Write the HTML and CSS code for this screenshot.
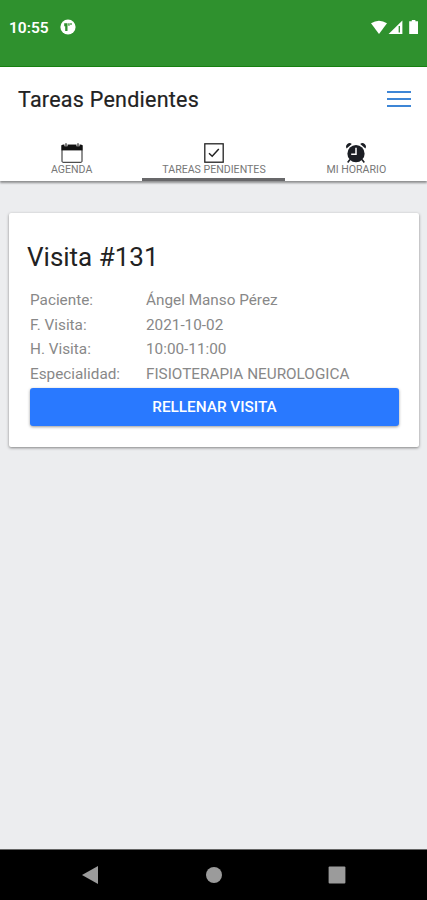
FILE: index.html
```html
<!DOCTYPE html>
<html lang="es">
<head>
  <meta charset="UTF-8">
  <meta name="viewport" content="width=device-width, initial-scale=1.0">
  <title>Tareas Pendientes</title>
  <link rel="stylesheet" href="styles.css">
</head>
<body>
  <div class="status-bar">
    <span class="clock">10:55</span>
    <svg class="app-icon" width="16" height="16" viewBox="0 0 16 16">
      <circle cx="8" cy="8" r="7.6" fill="#fff"/>
      <path d="M4.2 4.3h3.3v7.8H5.2V7.2h-1z" fill="#2f912e"/>
      <path d="M8.3 4.2h1.3v2.6H8.3zM10.2 4.2h1.6v1.6h-1.6z" fill="#2f912e"/>
    </svg>
    <svg class="signals" width="50" height="16" viewBox="0 0 50 16">
      <path d="M1 3.3Q9 -1.7 17 3.3L9 14z" fill="#fff"/>
      <path d="M18.6 14L32.4 0.4V14z" fill="#fff"/>
      <path d="M29.3 6V12.6" stroke="#2f912e" stroke-width="1.3"/>
      <path d="M41.8 0h3.6v1.3H48V14h-8.8V1.3h2.6z" fill="#fff"/>
    </svg>
  </div>

  <header class="header">
    <h1>Tareas Pendientes</h1>
    <button class="menu" aria-label="Menú"><span></span><span></span><span></span></button>
  </header>

  <nav class="tabs">
    <a class="tab">
      <svg width="22" height="20" viewBox="0 0 22 20">
        <rect x="1" y="2" width="20" height="17.3" rx="1" fill="#fff" stroke="#222" stroke-width="1"/>
        <path d="M0.5 2h21v5.4h-21z" fill="#111"/>
        <path d="M5 0.3v3M17 0.3v3" stroke="#fff" stroke-width="3"/>
        <path d="M5 0.3v3M17 0.3v3" stroke="#222" stroke-width="1.2"/>
      </svg>
      <span>AGENDA</span>
    </a>
    <a class="tab active">
      <svg width="22" height="20" viewBox="0 0 22 20">
        <rect x="1.8" y="0.8" width="18.4" height="18.4" fill="#fff" stroke="#222" stroke-width="1.3"/>
        <path d="M6 10.3l3.2 3L15.8 6" fill="none" stroke="#222" stroke-width="1.5"/>
      </svg>
      <span>TAREAS PENDIENTES</span>
    </a>
    <a class="tab">
      <svg width="22" height="20" viewBox="0 0 22 20">
        <circle cx="11" cy="10.7" r="8.6" fill="#1b1e24"/>
        <path d="M1.6 5.4A3.5 3.5 0 0 1 6.8 0.9zM20.4 5.4A3.5 3.5 0 0 0 15.2 0.9z" fill="#1b1e24"/>
        <path d="M5 16.5l-2.3 3M17 16.5l2.3 3" stroke="#1b1e24" stroke-width="1.6"/>
        <path d="M11 4.8v6.4H6.2" fill="none" stroke="#fff" stroke-width="1.5"/>
      </svg>
      <span>MI HORARIO</span>
    </a>
  </nav>

  <main class="content">
    <div class="card">
      <h2>Visita #131</h2>
      <dl class="datos">
        <dt>Paciente:</dt><dd>Ángel Manso Pérez</dd>
        <dt>F. Visita:</dt><dd>2021-10-02</dd>
        <dt>H. Visita:</dt><dd>10:00-11:00</dd>
        <dt>Especialidad:</dt><dd>FISIOTERAPIA NEUROLOGICA</dd>
      </dl>
      <button class="rellenar">RELLENAR VISITA</button>
    </div>
  </main>

  <div class="nav-bar">
    <svg width="18" height="20" viewBox="0 0 18 20"><path d="M1 10L17 1v18z" fill="#9b9b9b"/></svg>
    <svg width="18" height="20" viewBox="0 0 18 20"><circle cx="9" cy="10" r="8" fill="#9b9b9b"/></svg>
    <svg width="18" height="20" viewBox="0 0 18 20"><rect x="0.6" y="1.6" width="16.8" height="16.8" rx="1" fill="#9b9b9b"/></svg>
  </div>
</body>
</html>
```
FILE: styles.css
```css
* {
  box-sizing: border-box;
}
body {
  margin: 0;
  height: 900px;
  display: flex;
  flex-direction: column;
  overflow: hidden;
  font-family: Roboto, sans-serif;
  background: #ecedef;
  color: #222;
}
h1, h2, dl, dd {
  margin: 0;
}
button {
  font-family: inherit;
  border: none;
}
.status-bar {
  height: 67px;
  display: flex;
  align-items: flex-start;
  padding: 20px 7px 0 9px;
  background: #2f912e;
  border-bottom: 1px solid #178010;
  color: #fff;
}
.clock {
  font-size: 15.5px;
  font-weight: 600;
  line-height: 17px;
}
.app-icon {
  margin: -1px 0 0 11px;
}
.signals {
  margin-left: auto;
}
.header {
  height: 64px;
  display: flex;
  align-items: center;
  justify-content: space-between;
  padding: 0 16px 0 18px;
  background: #fff;
}
h1 {
  font-size: 21.5px;
  font-weight: 400;
  letter-spacing: 0.25px;
  -webkit-text-stroke: 0.2px #222;
}
.menu {
  width: 24px;
  padding: 0;
  display: flex;
  flex-direction: column;
  gap: 4.5px;
  background: none;
}
.menu span {
  height: 2.3px;
  background: #3e86d6;
}
.tabs {
  height: 50px;
  display: flex;
  background: #fff;
  box-shadow: 0 2px 2px rgba(0, 0, 0, 0.4);
}
.tab {
  flex: 1;
  display: flex;
  flex-direction: column;
  align-items: center;
  padding: 12px 0 0 1px;
  font-size: 10.6px;
  line-height: 14px;
  color: #777;
  white-space: nowrap;
}
.tab.active {
  border-bottom: 3px solid #68686a;
}
.content {
  flex: 1;
  padding: 32px 8px 0 9px;
}
.card {
  height: 234px;
  padding: 28px 20px 0 21px;
  background: #fff;
  border-radius: 2px;
  box-shadow: 0 1px 3px rgba(0, 0, 0, 0.45);
}
h2 {
  margin-left: -3px;
  font-size: 26px;
  font-weight: 400;
  line-height: 32px;
}
.datos {
  display: grid;
  grid-template-columns: 116px 1fr;
  grid-auto-rows: 24.5px;
  margin: 15px 0 2px;
  font-size: 15.3px;
  line-height: 24.5px;
  color: #888;
}
.rellenar {
  display: block;
  width: 100%;
  height: 38px;
  border-radius: 3px;
  background: #2979ff;
  box-shadow: 0 1px 3px rgba(0, 0, 0, 0.4);
  color: #fff;
  font-size: 15.3px;
  font-weight: 500;
}
.nav-bar {
  height: 51px;
  display: flex;
  align-items: center;
  justify-content: space-between;
  padding: 0 81px 1px;
  background: #000;
  border-top: 1px solid #666;
}
```
